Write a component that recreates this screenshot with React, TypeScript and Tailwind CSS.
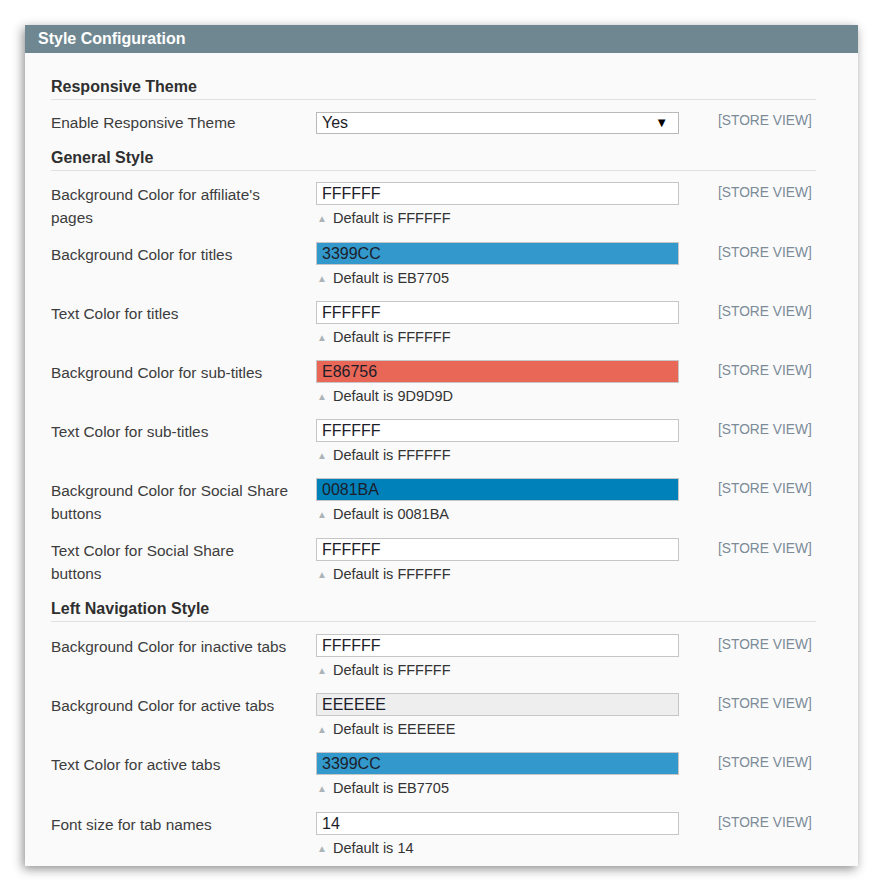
import React from 'react'

type Field = {
  label: string
  value: string
  hint: string
  bg?: string
}

// labels use \n where the original column wraps
const GENERAL: Field[] = [
  { label: "Background Color for affiliate's\npages", value: 'FFFFFF', hint: 'FFFFFF' },
  { label: 'Background Color for titles', value: '3399CC', hint: 'EB7705', bg: 'bg-[#3399cc]' },
  { label: 'Text Color for titles', value: 'FFFFFF', hint: 'FFFFFF' },
  { label: 'Background Color for sub-titles', value: 'E86756', hint: '9D9D9D', bg: 'bg-[#e86756]' },
  { label: 'Text Color for sub-titles', value: 'FFFFFF', hint: 'FFFFFF' },
  { label: 'Background Color for Social Share\nbuttons', value: '0081BA', hint: '0081BA', bg: 'bg-[#0081ba]' },
  { label: 'Text Color for Social Share\nbuttons', value: 'FFFFFF', hint: 'FFFFFF' },
]

const NAVIGATION: Field[] = [
  { label: 'Background Color for inactive tabs', value: 'FFFFFF', hint: 'FFFFFF' },
  { label: 'Background Color for active tabs', value: 'EEEEEE', hint: 'EEEEEE', bg: 'bg-[#eeeeee]' },
  { label: 'Text Color for active tabs', value: '3399CC', hint: 'EB7705', bg: 'bg-[#3399cc]' },
  { label: 'Font size for tab names', value: '14', hint: '14' },
]

function Heading({ children, className = '' }: { children: React.ReactNode; className?: string }) {
  return (
    <div className={`mr-[42px] border-b border-[#e1e1e1] pb-[2px] text-[16px] font-bold leading-5 text-[#2f2f2f] ${className}`}>
      {children}
    </div>
  )
}

function ColorRow({ f }: { f: Field }) {
  return (
    <div className="flex h-[43px] items-start">
      <div className="h-[43px] w-[265px] whitespace-pre-line pt-[1px] text-[15.4px] leading-[23px] text-[#3d3d3d]">
        {f.label}
      </div>
      <div className="w-[363px]">
        <div
          className={`h-[23px] border border-[#c6c6c6] px-[5px] text-[16px] leading-[21px] text-[#1d1d2a] ${f.bg ?? 'bg-white'}`}
        >
          {f.value}
        </div>
        <div className="mt-[5px] flex items-center text-[14.5px] leading-[17px] text-[#333]">
          <span className="ml-[1px] mr-[6px] text-[10px] text-[#aab4b9]">▲</span>
          Default is {f.hint}
        </div>
      </div>
      <div className="ml-[39px] pt-[3px] text-[13.75px] leading-[16px] text-[#7b8b98]">[STORE VIEW]</div>
    </div>
  )
}

export default function App() {
  return (
    <div className="min-h-[889px] bg-white pl-[25px] pt-[25px] font-['Liberation_Sans',Arial,sans-serif]">
      <div className="w-[833px] bg-[#fafafa] shadow-[-2px_3px_10px_rgba(0,0,0,0.45)]">
        <div className="h-[28px] bg-[#6f8791] pl-[13px] text-[16px] font-bold leading-[28px] text-white">
          Style Configuration
        </div>

        <div className="pl-[26px] pt-[24px] pb-[11px]">
          <Heading>Responsive Theme</Heading>

          <div className="mt-[12px] flex items-start">
            <div className="w-[265px] text-[15.4px] leading-[22px] text-[#3d3d3d]">Enable Responsive Theme</div>
            <div className="flex h-[22px] w-[363px] items-center justify-between border border-[#b9b9b9] bg-white pl-[5px] pr-[10px] text-[16px] text-[#1d1d2a]">
              <span>Yes</span>
              <span className="text-[13px] text-black">▼</span>
            </div>
            <div className="ml-[39px] pt-[1px] text-[13.75px] leading-[16px] text-[#7b8b98]">[STORE VIEW]</div>
          </div>

          <Heading className="mt-[14px]">General Style</Heading>

          <div className="mt-[11px] flex flex-col gap-[16px]">
            {GENERAL.map((f, i) => (
              <div key={f.label} className={i === 1 || i === 6 ? 'mt-[1px]' : ''}>
                <ColorRow f={f} />
              </div>
            ))}
          </div>

          <Heading className="mt-[18px]">Left Navigation Style</Heading>

          <div className="mt-[12px] flex flex-col gap-[16px]">
            {NAVIGATION.map((f, i) => (
              <div key={f.label} className={i === 3 ? 'mt-[1px]' : ''}>
                <ColorRow f={f} />
              </div>
            ))}
          </div>
        </div>
      </div>
    </div>
  )
}
